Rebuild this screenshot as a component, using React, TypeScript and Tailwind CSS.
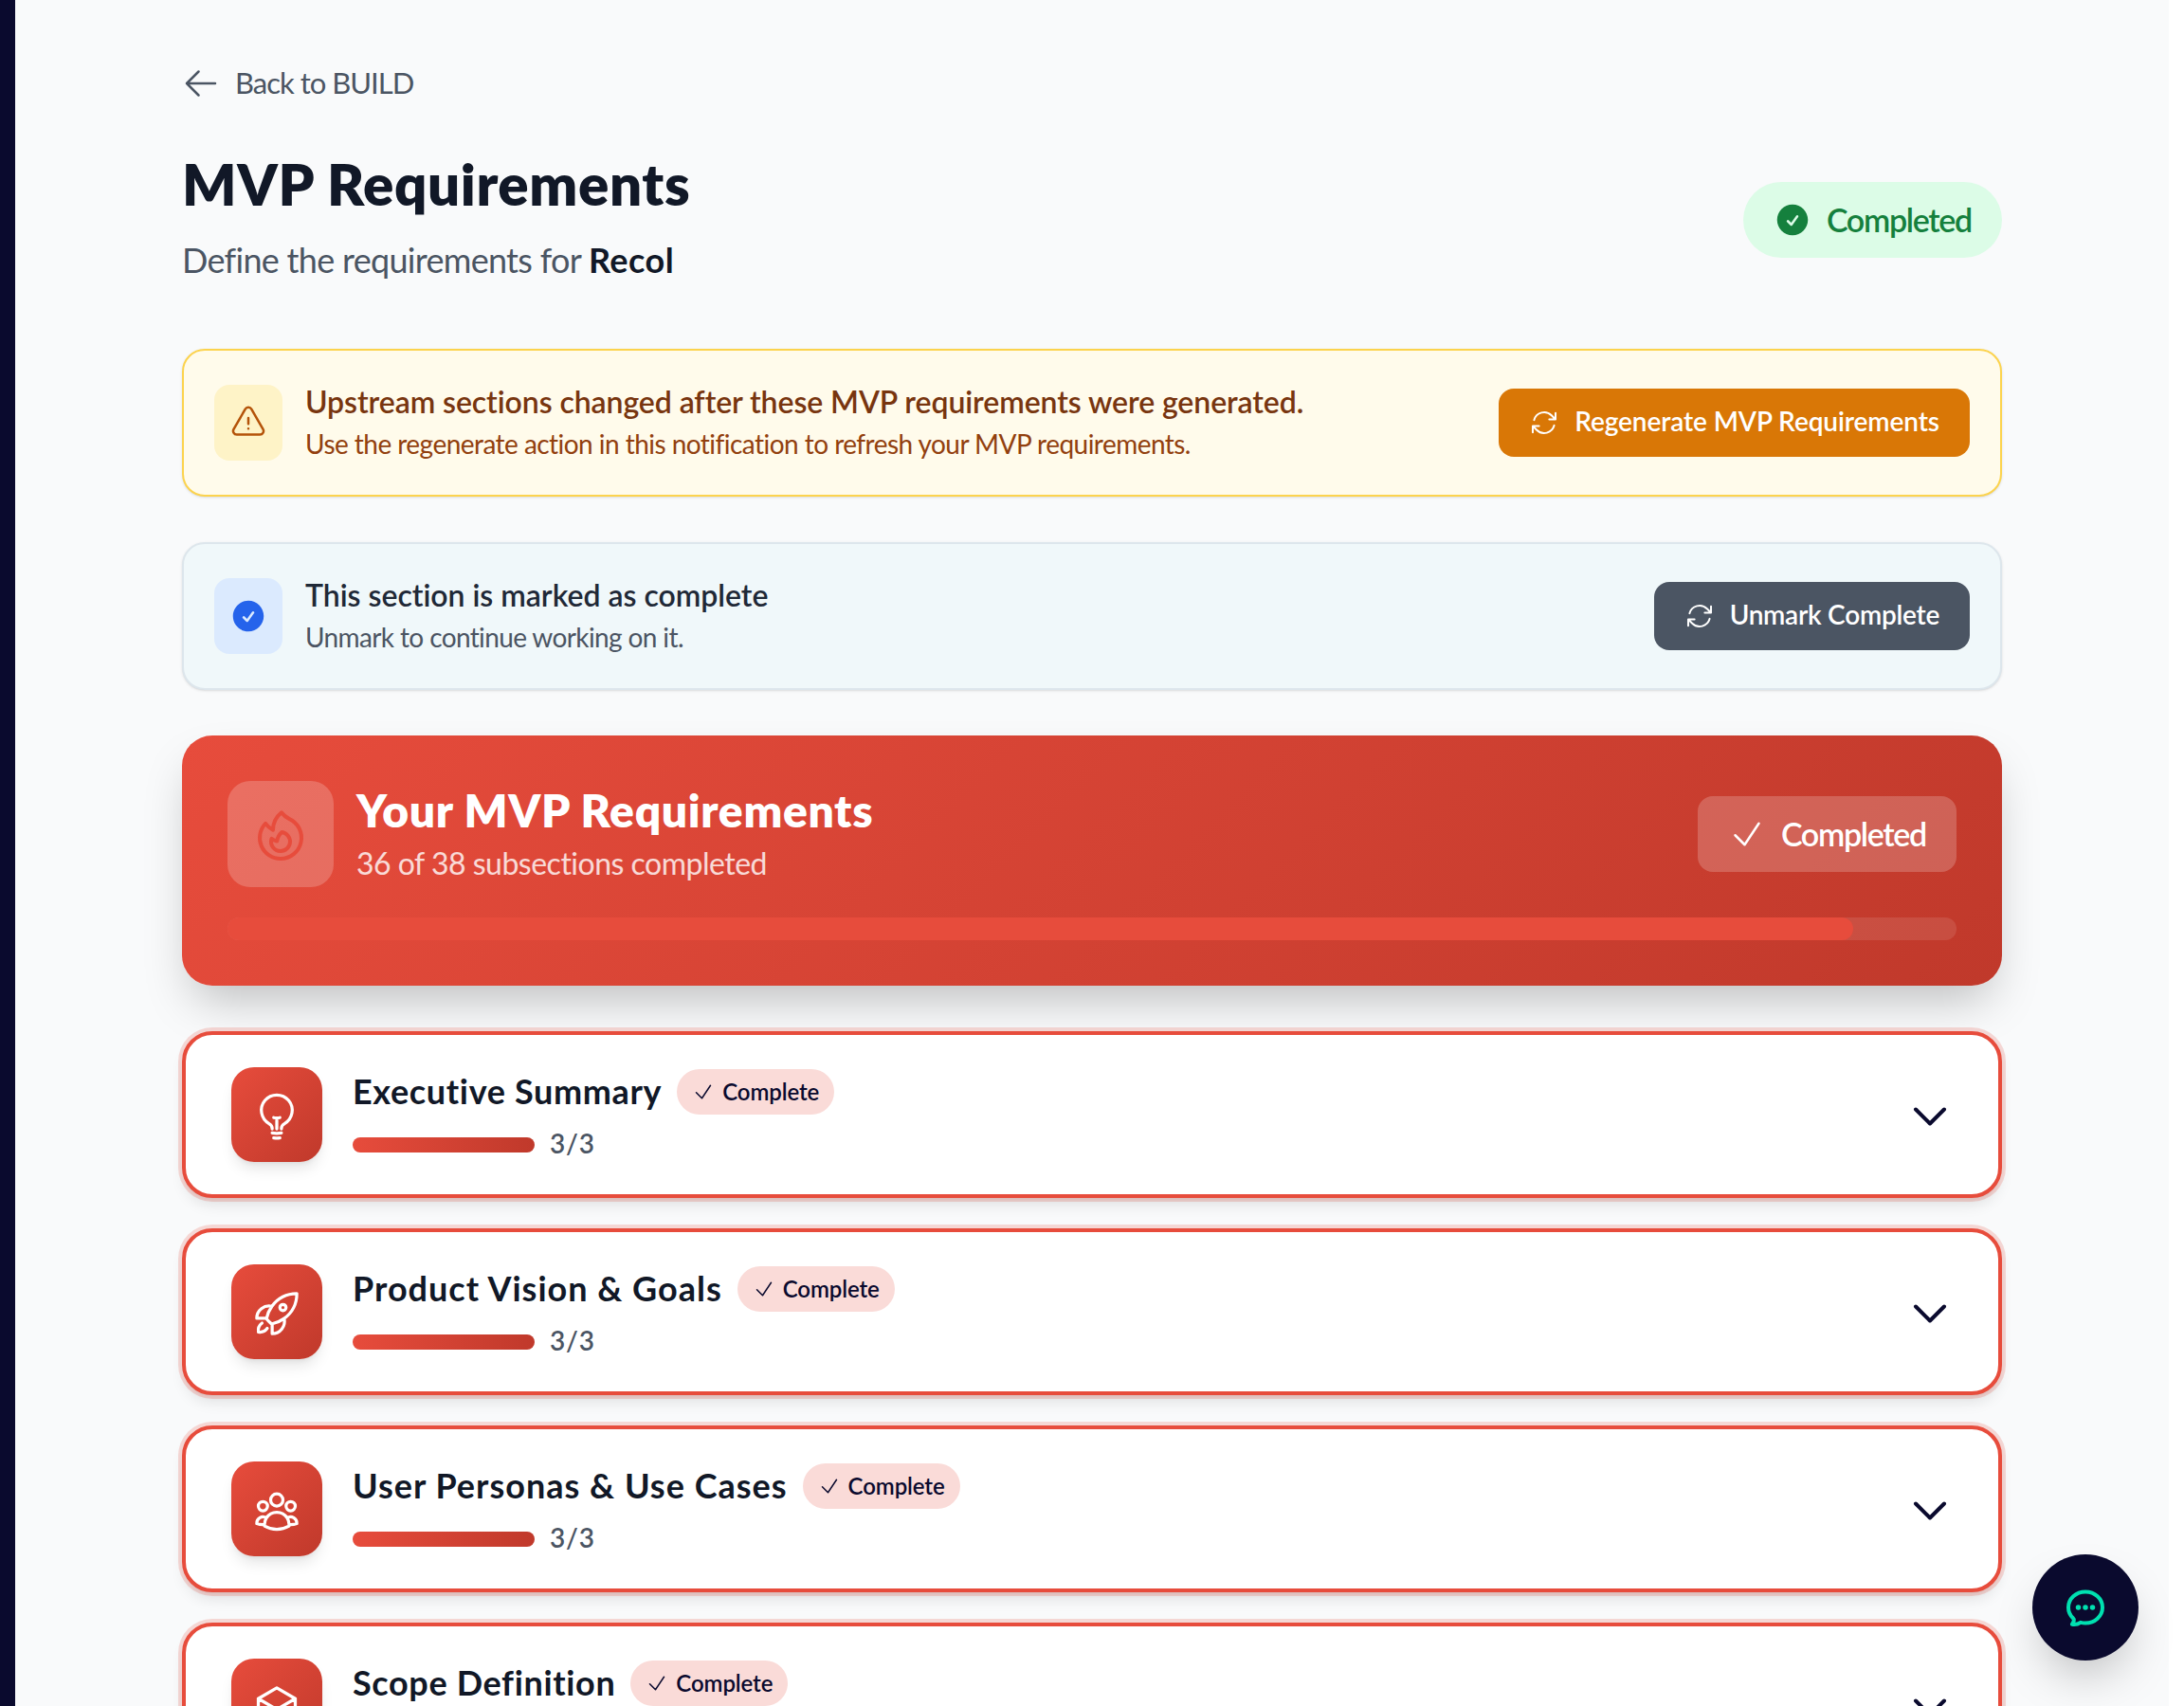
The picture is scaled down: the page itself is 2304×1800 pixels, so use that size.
import React from 'react';
import {
  HiOutlineArrowLeft,
  HiOutlineArrowPath,
  HiOutlineCheck,
  HiCheckCircle,
  HiOutlineChevronDown,
  HiOutlineChatBubbleOvalLeftEllipsis,
  HiOutlineCube,
  HiOutlineExclamationTriangle,
  HiOutlineFire,
  HiOutlineLightBulb,
  HiOutlineRocketLaunch,
  HiOutlineUserGroup,
} from 'react-icons/hi2';

const sections = [
  { title: 'Executive Summary', icon: HiOutlineLightBulb, tracking: 'tracking-[0.65px]' },
  { title: 'Product Vision & Goals', icon: HiOutlineRocketLaunch, tracking: 'tracking-[1px]' },
  { title: 'User Personas & Use Cases', icon: HiOutlineUserGroup, tracking: 'tracking-[1px]' },
  { title: 'Scope Definition', icon: HiOutlineCube, tracking: 'tracking-[0.65px]' },
];

export default function App() {
  return (
    <div className="flex h-[1800px] overflow-hidden bg-white font-['Lato',sans-serif]">
      <div className="w-4 shrink-0 bg-[#0a0a2e]" />

      <main className="flex-1 bg-[#f9fafb] pt-16">
        <div className="mx-auto w-[1920px]">
          {/* Back link */}
          <div className="mb-12 flex h-12 items-center gap-4 text-[31px] tracking-[-1px] text-[#4b5563]">
            <HiOutlineArrowLeft className="h-10 w-10" />
            <span className="-translate-y-px">Back to BUILD</span>
          </div>

          {/* Header */}
          <div className="mb-16 flex items-center justify-between">
            <div>
              <h1 className="mb-4 -translate-y-0.5 text-[60px] leading-[72px] font-extrabold tracking-[0.6px] text-[#111827]">
                MVP Requirements
              </h1>
              <p className="-translate-y-0.5 text-[36px] leading-[56px] tracking-[-0.7px] text-[#4b5563]">
                Define the requirements for <span className="font-bold tracking-[0.5px] text-[#111827]">Recol</span>
              </p>
            </div>
            <div className="flex h-20 items-center gap-4 rounded-full bg-[#dcfce7] px-8 text-[34px] font-semibold tracking-[-1.3px] text-[#15803d]">
              <HiCheckCircle className="h-10 w-10" />
              <span className="-translate-y-px">Completed</span>
            </div>
          </div>

          {/* Upstream notice */}
          <div className="mb-12 flex items-center justify-between rounded-3xl border-2 border-[#fcd34d] bg-[#fffbeb] p-8 shadow-sm">
            <div className="flex items-center gap-6">
              <div className="flex h-20 w-[72px] items-center justify-center rounded-2xl bg-[#fef3c7] text-[#b45309]">
                <HiOutlineExclamationTriangle className="h-10 w-10" />
              </div>
              <div className="-translate-y-0.5">
                <div className="text-[32px] leading-[48px] font-semibold tracking-[-0.08px] text-[#78350f]">
                  Upstream sections changed after these MVP requirements were generated.
                </div>
                <div className="text-[28px] leading-10 tracking-[-0.54px] text-[#92400e]">
                  Use the regenerate action in this notification to refresh your MVP requirements.
                </div>
              </div>
            </div>
            <button className="flex h-[72px] items-center gap-4 rounded-2xl bg-[#d97706] px-8 text-[28px] font-semibold tracking-[-0.09px] text-white">
              <HiOutlineArrowPath className="h-8 w-8" />
              <span className="-translate-y-0.5">Regenerate MVP Requirements</span>
            </button>
          </div>

          {/* Complete notice */}
          <div className="mb-12 flex items-center justify-between rounded-3xl border-2 border-[#dde6ec] bg-[#f0f8fa] p-8 shadow-sm">
            <div className="flex items-center gap-6">
              <div className="flex h-20 w-[72px] items-center justify-center rounded-2xl bg-[#dbeafe] text-[#2563eb]">
                <HiCheckCircle className="h-10 w-10" />
              </div>
              <div className="-translate-y-0.5">
                <div className="text-[32px] leading-[48px] font-semibold tracking-[-0.02px] text-[#1f2937]">This section is marked as complete</div>
                <div className="text-[28px] leading-10 tracking-[-0.62px] text-[#4b5563]">Unmark to continue working on it.</div>
              </div>
            </div>
            <button className="flex h-[72px] items-center gap-4 rounded-2xl bg-[#4b5563] px-8 text-[28px] font-semibold tracking-[-0.25px] text-white">
              <HiOutlineArrowPath className="h-8 w-8" />
              <span className="-translate-y-0.5">Unmark Complete</span>
            </button>
          </div>

          {/* Progress card */}
          <div className="mb-12 rounded-[32px] bg-[linear-gradient(135deg,#e74c3c,#c0392b)] p-12 shadow-2xl">
            <div className="mb-8 flex items-center justify-between">
              <div className="flex items-center gap-6">
                <div className="flex h-28 w-28 items-center justify-center rounded-3xl bg-white/20 pt-1 text-[#e74c3c]">
                  <HiOutlineFire className="h-16 w-16" />
                </div>
                <div className="-translate-y-px">
                  <div className="text-[48px] leading-[64px] font-extrabold tracking-[0.65px] text-white">Your MVP Requirements</div>
                  <div className="text-[32px] leading-[48px] tracking-[-0.5px] text-white/80">36 of 38 subsections completed</div>
                </div>
              </div>
              <div className="flex h-20 items-center gap-4 rounded-2xl bg-white/20 px-8 text-[34px] font-semibold tracking-[-1.3px] text-white">
                <HiOutlineCheck className="h-10 w-10" />
                <span className="-translate-y-px">Completed</span>
              </div>
            </div>
            <div className="h-6 overflow-hidden rounded-full bg-white/10">
              <div className="h-full w-[94%] rounded-full bg-[#e74c3c]" />
            </div>
          </div>

          {/* Sections */}
          <div className="flex flex-col gap-8">
            {sections.map((section) => {
              const Icon = section.icon;
              return (
                <div
                  key={section.title}
                  className="flex h-44 items-center justify-between rounded-[32px] border-4 border-[#e74c3c] bg-white px-12 shadow-lg ring-4 ring-[#e74c3c]/20"
                >
                  <div className="flex items-center gap-8">
                    <div className="flex h-[100px] w-24 items-center justify-center rounded-3xl bg-[linear-gradient(135deg,#e74c3c,#c0392b)] pt-1 text-white shadow-lg">
                      <Icon className="h-[52px] w-[52px]" />
                    </div>
                    <div className="flex h-[104px] flex-col">
                      <div className="flex h-14 items-center gap-4">
                        <span className={`-translate-y-px text-[36px] font-bold text-[#111827] ${section.tracking}`}>{section.title}</span>
                        <span className="flex h-12 items-center gap-2 rounded-full bg-[#fadbd8] px-4 text-2xl font-semibold tracking-[-0.1px] text-[#0a0a2e]">
                          <HiOutlineCheck className="h-6 w-6" />
                          Complete
                        </span>
                      </div>
                      <div className="mt-2 flex h-10 items-center gap-4">
                        <div className="h-4 w-48 rounded-full bg-gradient-to-r from-[#e74c3c] to-[#c0392b]" />
                        <span className="-translate-y-0.5 text-[28px] font-semibold tracking-[0.8px] text-[#4b5563]">3/3</span>
                      </div>
                    </div>
                  </div>
                  <div className="pt-1 text-[#0a0a2e]">
                    <HiOutlineChevronDown className="h-12 w-12" strokeWidth={2} />
                  </div>
                </div>
              );
            })}
          </div>
        </div>
      </main>

      <div className="w-4 shrink-0 bg-white" />

      {/* Chat button */}
      <button className="fixed right-12 bottom-12 flex h-28 w-28 items-center justify-center rounded-full bg-[#0a0a2e] text-[#00e0b0] shadow-2xl">
        <HiOutlineChatBubbleOvalLeftEllipsis className="h-12 w-12" strokeWidth={2} />
      </button>
    </div>
  );
}
